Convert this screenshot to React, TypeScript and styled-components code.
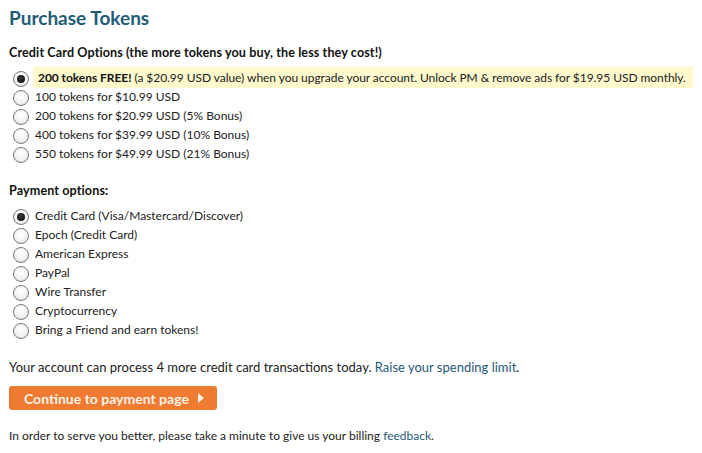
import React, { useState } from "react";
import styled, { createGlobalStyle } from "styled-components";

const GlobalStyle = createGlobalStyle`
  body {
    margin: 0;
    background: #fff;
    font-family: Lato, "Open Sans", sans-serif;
    color: #222;
  }
`;

const tokenOptions = [
  "100 tokens for $10.99 USD",
  "200 tokens for $20.99 USD (5% Bonus)",
  "400 tokens for $39.99 USD (10% Bonus)",
  "550 tokens for $49.99 USD (21% Bonus)",
];

const paymentOptions = [
  "Credit Card (Visa/Mastercard/Discover)",
  "Epoch (Credit Card)",
  "American Express",
  "PayPal",
  "Wire Transfer",
  "Cryptocurrency",
  "Bring a Friend and earn tokens!",
];

const App = () => {
  const [token, setToken] = useState(-1);
  const [payment, setPayment] = useState(0);

  return (
    <Page>
      <GlobalStyle />
      <Title>Purchase Tokens</Title>

      <SectionLabel>Credit Card Options (the more tokens you buy, the less they cost!)</SectionLabel>
      <OptionList>
        <Option onClick={() => setToken(-1)}>
          <Radio checked={token === -1} />
          <Highlight>
            <b>200 tokens FREE!</b> (a $20.99 USD value) when you upgrade your account. Unlock PM &amp; remove ads for $19.95 USD monthly.
          </Highlight>
        </Option>
        {tokenOptions.map((label, i) => (
          <Option key={label} onClick={() => setToken(i)}>
            <Radio checked={token === i} />
            <span>{label}</span>
          </Option>
        ))}
      </OptionList>

      <SectionLabel $gap={19}>Payment options:</SectionLabel>
      <OptionList>
        {paymentOptions.map((label, i) => (
          <Option key={label} onClick={() => setPayment(i)}>
            <Radio checked={payment === i} />
            <span>{label}</span>
          </Option>
        ))}
      </OptionList>

      <Note $gap={19} $size={13}>
        Your account can process 4 more credit card transactions today. <Link href="#">Raise your spending limit</Link>.
      </Note>

      <ContinueButton>
        Continue to payment page
        <Arrow />
      </ContinueButton>

      <Note $gap={17}>
        In order to serve you better, please take a minute to give us your billing <Link href="#">feedback</Link>.
      </Note>
    </Page>
  );
};

const Page = styled.div`
  padding: 6px 9px 10px;
  font-size: 12px;
`;

const Title = styled.h1`
  margin: 0;
  font-size: 19px;
  line-height: 24px;
  font-weight: 700;
  color: #1f5d77;
`;

const SectionLabel = styled.div<{ $gap?: number }>`
  margin-top: ${(p) => p.$gap ?? 14}px;
  font-size: 12.6px;
  font-weight: 700;
  line-height: 18px;
  letter-spacing: 0.1px;
  color: #111;
`;

const OptionList = styled.div`
  margin-top: 6px;
  display: flex;
  flex-direction: column;
`;

const Option = styled.label`
  display: flex;
  align-items: center;
  height: 19px;
  white-space: nowrap;
  cursor: pointer;
`;

const Radio = styled.span<{ checked: boolean }>`
  position: relative;
  flex: none;
  width: 16px;
  height: 16px;
  margin: 3px 6px 0 4px;
  border-radius: 50%;
  border: 1px solid #7a7a7a;
  background: radial-gradient(circle at 50% 35%, #ffffff 0%, #f3f3f3 55%, #d6d6d6 100%);
  box-sizing: border-box;

  &::after {
    content: "";
    position: absolute;
    left: 3px;
    top: 3px;
    width: 8px;
    height: 8px;
    border-radius: 50%;
    background: radial-gradient(circle at 45% 40%, #3a3a3a 0%, #111 80%);
    display: ${(p) => (p.checked ? "block" : "none")};
  }
`;

const Highlight = styled.span`
  flex: none;
  background: #fdf9cd;
  padding: 2px 7px 2px 5px;
  margin-left: -2px;
  line-height: 17px;
  letter-spacing: -0.05px;

  b {
    color: #111;
  }
`;

const Note = styled.div<{ $gap: number; $size?: number }>`
  margin-top: ${(p) => p.$gap}px;
  font-size: ${(p) => p.$size ?? 12}px;
  line-height: 18px;
`;

const Link = styled.a`
  color: #1f5a78;
  text-decoration: none;
`;

const ContinueButton = styled.button`
  margin-top: 10px;
  display: flex;
  align-items: center;
  gap: 9px;
  height: 24px;
  width: 208px;
  padding: 0 0 0 15px;
  border: none;
  border-radius: 3px;
  background: #ee7b31;
  color: #fdf1e6;
  font-family: Lato, "Open Sans", sans-serif;
  font-size: 14px;
  font-weight: 700;
  cursor: pointer;
`;

const Arrow = styled.span`
  width: 0;
  height: 0;
  border-top: 5px solid transparent;
  border-bottom: 5px solid transparent;
  border-left: 6px solid #fdf1e6;
`;

export default App;
